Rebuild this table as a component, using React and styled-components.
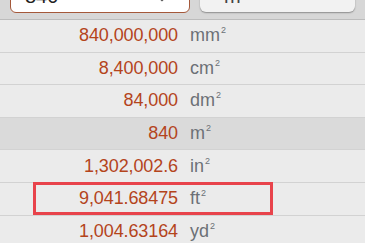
import React from "react";
import styled, { createGlobalStyle } from "styled-components";

const GlobalStyle = createGlobalStyle`
  html, body {
    margin: 0;
    padding: 0;
    background: #ebebeb;
    font-family: "Liberation Sans", Arial, sans-serif;
  }
`;

const rows = [
  { value: "840,000,000", unit: "mm" },
  { value: "8,400,000", unit: "cm" },
  { value: "84,000", unit: "dm" },
  { value: "840", unit: "m", current: true },
  { value: "1,302,002.6", unit: "in" },
  { value: "9,041.68475", unit: "ft", marked: true },
  { value: "1,004.63164", unit: "yd" },
];

const App = () => (
  <Screen>
    <GlobalStyle />
    <Header>
      <InputBox>
        <InputText>840</InputText>
        <Caret viewBox="0 0 12 12">
          <path d="M3 1 L8 6 L3 11" fill="none" stroke="#555" strokeWidth="1.6" />
        </Caret>
      </InputBox>
      <UnitBox>
        <UnitBoxText>m</UnitBoxText>
      </UnitBox>
    </Header>
    <List>
      {rows.map((r) => (
        <Row key={r.unit} $current={r.current}>
          <Cell $marked={r.marked}>
            <Value>{r.value}</Value>
            <Unit>
              {r.unit}
              <sup>2</sup>
            </Unit>
          </Cell>
        </Row>
      ))}
    </List>
  </Screen>
);

const Screen = styled.div`
  width: 365px;
  height: 243px;
  overflow: hidden;
  background: #ebebeb;
`;

const Header = styled.div`
  display: flex;
  gap: 10px;
  margin-top: -22px;
  padding: 0 10px 6px 10px;
  background: #d7d7d7;
  border-bottom: 1px solid #bcbcbc;
`;

const InputBox = styled.div`
  box-sizing: border-box;
  width: 180px;
  height: 35px;
  display: flex;
  align-items: flex-end;
  justify-content: space-between;
  padding: 0 22px 6px 14px;
  background: #ffffff;
  border: 1.5px solid #a4583a;
  border-radius: 6px;
`;

const InputText = styled.span`
  font-size: 20px;
  line-height: 1;
  color: #222;
`;

const Caret = styled.svg`
  width: 10px;
  height: 12px;
  transform: rotate(90deg);
  margin-bottom: 1px;
`;

const UnitBox = styled.div`
  box-sizing: border-box;
  flex: 1;
  height: 34px;
  display: flex;
  align-items: flex-end;
  padding: 0 0 6px 24px;
  background: #f2f2f2;
  border-radius: 6px;
  box-shadow: 0 1px 1.5px rgba(0, 0, 0, 0.35);
`;

const UnitBoxText = styled.span`
  font-size: 20px;
  line-height: 1;
  color: #444;
`;

const List = styled.div`
  display: flex;
  flex-direction: column;
`;

const Row = styled.div`
  box-sizing: border-box;
  height: 32.6px;
  display: flex;
  align-items: center;
  background: ${(p) => (p.$current ? "#dadada" : "#ebebeb")};
  border-bottom: 1px solid #d2d2d2;
`;

const Cell = styled.div`
  box-sizing: border-box;
  width: 240px;
  height: 33px;
  margin-left: 33px;
  display: grid;
  grid-template-columns: 142px auto;
  column-gap: 12px;
  align-items: center;
  border: 3px solid ${(p) => (p.$marked ? "#e8434b" : "transparent")};
`;

const Value = styled.span`
  text-align: right;
  font-size: 18px;
  color: #b4441c;
  letter-spacing: -0.1px;
`;

const Unit = styled.span`
  font-size: 18px;
  color: #6c7076;

  sup {
    font-size: 9px;
    vertical-align: 8px;
    margin-left: 1px;
  }
`;

export default App;
